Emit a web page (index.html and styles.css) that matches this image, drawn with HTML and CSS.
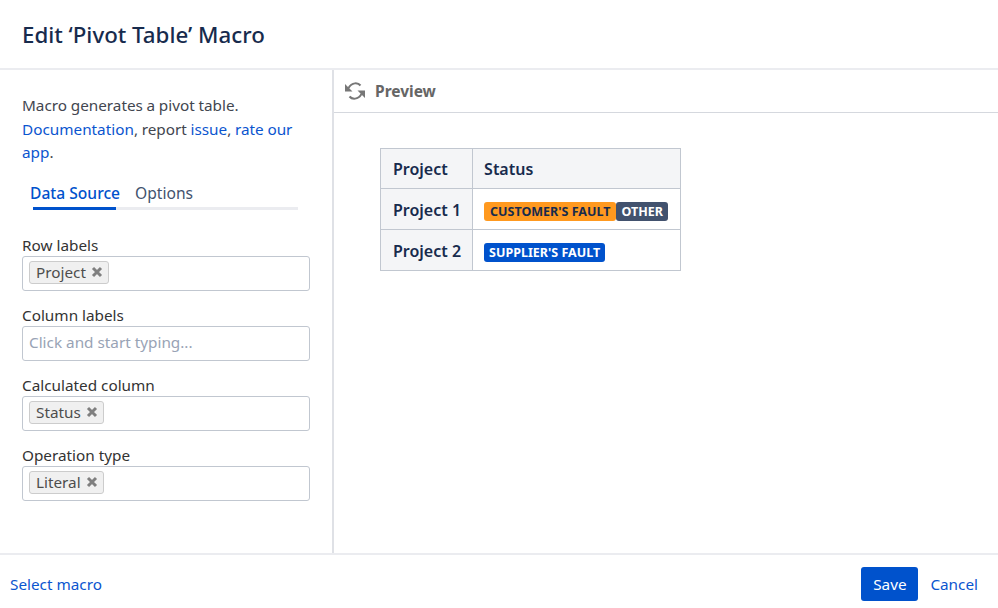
FILE: index.html
```html
<!DOCTYPE html>
<html lang="en">
<head>
<meta charset="utf-8">
<title>Edit 'Pivot Table' Macro</title>
<link rel="stylesheet" href="styles.css">
</head>
<body>
<div class="dialog">
  <header class="head"><h1 class="title">Edit ‘Pivot Table’ Macro</h1></header>
  <div class="main">
    <aside class="side">
      <p class="intro">Macro generates a pivot table. <a href="#">Documentation</a>, report <a href="#">issue</a>, <a href="#">rate our app</a>.</p>
      <div class="tabs">
        <span class="tab tab-on">Data Source</span>
        <span class="tab">Options</span>
      </div>
      <div class="field">
        <label class="label">Row labels</label>
        <div class="box"><span class="chip">Project <svg class="x" viewBox="0 0 12 12"><path d="M2 2l8 8M10 2l-8 8"/></svg></span></div>
      </div>
      <div class="field">
        <label class="label">Column labels</label>
        <div class="box"><span class="ph">Click and start typing...</span></div>
      </div>
      <div class="field">
        <label class="label">Calculated column</label>
        <div class="box"><span class="chip">Status <svg class="x" viewBox="0 0 12 12"><path d="M2 2l8 8M10 2l-8 8"/></svg></span></div>
      </div>
      <div class="field">
        <label class="label">Operation type</label>
        <div class="box"><span class="chip">Literal <svg class="x" viewBox="0 0 12 12"><path d="M2 2l8 8M10 2l-8 8"/></svg></span></div>
      </div>
    </aside>
    <section class="preview">
      <div class="pbar">
        <svg class="sync" viewBox="0 0 20 20"><path d="M15.500 4.500C13 1.500 7 1 3.500 7"/><path d="M4.500 15.500C7 18.500 13 19 16.500 13"/><path class="fill" d="M0 3v7.500h7.500zM20 17V9.500h-7.500z"/></svg>
        <span class="ptitle">Preview</span>
      </div>
      <div class="pbody">
        <table class="pivot">
          <tr><th class="c1 hd">Project</th><th class="hd">Status</th></tr>
          <tr><th class="c1">Project 1</th><td><span class="lozenge orange">CUSTOMER'S FAULT</span><span class="lozenge slate">OTHER</span></td></tr>
          <tr><th class="c1">Project 2</th><td><span class="lozenge blue">SUPPLIER'S FAULT</span></td></tr>
        </table>
      </div>
    </section>
  </div>
  <footer class="foot">
    <a href="#">Select macro</a>
    <div class="actions"><button class="save">Save</button><a href="#">Cancel</a></div>
  </footer>
</div>
</body>
</html>
```
FILE: styles.css
```css
* { box-sizing: border-box; }
html, body { margin: 0; height: 100%; }
body { font-family: "Noto Sans", "Open Sans", sans-serif; font-size: 15.3px; color: #42464f; background: #fff; overflow: hidden; }
a { color: #0b55cf; text-decoration: none; }
.dialog { width: 998px; height: 608px; display: flex; flex-direction: column; }
.head { height: 70px; border-bottom: 2px solid #ebecf0; padding: 0 22px; display: flex; align-items: center; }
.title { margin: 0; font-size: 22.3px; font-weight: 500; color: #172b4d; }
.main { height: 483px; display: flex; }
.side { width: 334px; border-right: 2px solid #dfe1e6; padding: 24px 22px 0 22px; }
.intro { margin: 0; line-height: 23.5px; word-spacing: -0.3px; }
.tabs { margin: 16px 12px 0 11px; display: flex; gap: 18px; border-bottom: 3px solid #ebecf0; height: 29px; }
.tab { font-size: 15.6px; color: #42526e; line-height: 24px; height: 29px; }
.tab-on { color: #0052cc; font-weight: 500; margin: 0 -3px; position: relative; }
.tab-on::after { content: ""; position: absolute; left: 3px; right: 4px; bottom: 0; height: 3px; background: #0052cc; }
.field { margin-top: 13px; }
.tabs + .field { margin-top: 24px; }
.label { display: block; line-height: 22px; color: #333; }
.box { height: 35px; border: 1px solid #c1c7d0; border-radius: 3px; padding: 3px 6px 5px; display: flex; align-items: center; }
.chip { height: 23px; padding: 0 5px 0 6px; display: inline-flex; align-items: center; gap: 5px; background: #f0f0f0; border: 1px solid #cccccc; border-radius: 3px; color: #4d4d4d; }
.x { width: 12px; height: 12px; stroke: #7f7f7f; stroke-width: 3; fill: none; }
.ph { color: #98a3b5; }
.preview { flex: 1; }
.pbar { height: 43px; border-bottom: 1px solid #d5d8de; padding-left: 11px; display: flex; align-items: center; gap: 10px; }
.sync { width: 20px; height: 20px; fill: none; stroke: #777; stroke-width: 2; }
.sync .fill { fill: #777; stroke: none; }
.ptitle { font-weight: 700; color: #666; font-size: 15.5px; }
.pbody { padding: 35px 0 0 46px; }
.pivot { border-collapse: collapse; width: 300.5px; color: #172b4d; }
.pivot th, .pivot td { border: 1px solid #c1c7d0; padding: 1px 11px 0 12px; height: 41px; text-align: left; white-space: nowrap; }
.pivot td { padding: 3px 11px 0 11px; }
.pivot th { font-size: 16px; font-weight: 600; }
.pivot th + th { padding-left: 11px; }
.pivot .c1 { background: #f4f5f7; width: 92px; }
.pivot .hd { background: #f4f5f7; height: 40px; }
.lozenge { display: inline-block; height: 19px; line-height: 19px; padding: 0 5px; border-radius: 3px; font-size: 12.5px; font-weight: 700; vertical-align: middle; }
.orange { background: #ff991f; color: #172b4d; padding: 0 6px; }
.slate { background: #42526e; color: #fff; }
.blue { background: #0052cc; color: #fff; }
.foot { flex: 1; border-top: 2px solid #ebecf0; padding: 4px 20px 0 10px; display: flex; align-items: center; justify-content: space-between; }
.actions { display: flex; align-items: center; gap: 12px; }
.save { height: 34px; width: 57px; padding: 0; border: 0; border-radius: 3px; background: #0052cc; color: #fff; font: inherit; }
```
